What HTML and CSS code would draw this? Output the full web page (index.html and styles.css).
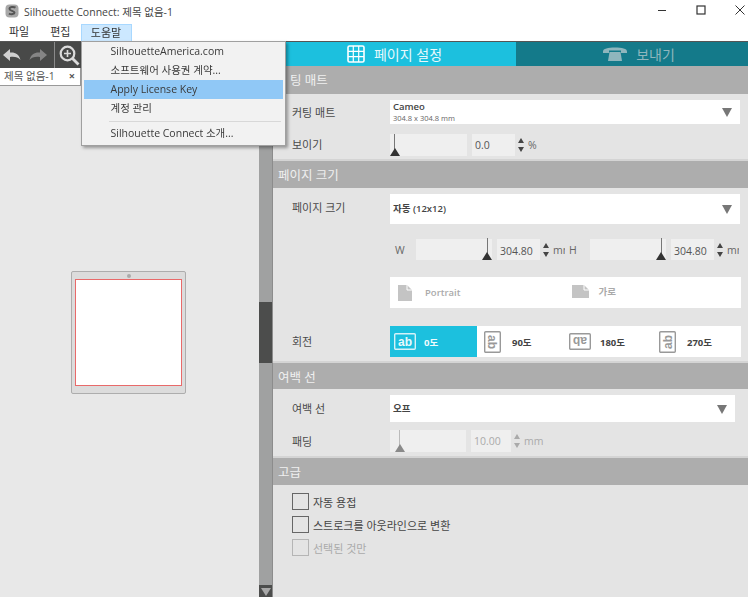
FILE: index.html
```html
<!DOCTYPE html>
<html lang="ko">
<head>
<meta charset="utf-8">
<meta name="viewport" content="width=device-width, initial-scale=1">
<title>Silhouette Connect</title>
<link rel="stylesheet" href="styles.css">
</head>
<body>
<div class="app">

  <div class="titlebar">
    <svg class="app-icon" width="14" height="14" viewBox="0 0 14 14">
      <rect x="0.5" y="0.5" width="13" height="13" rx="4" fill="#a8a8a8"/>
      <path d="M10.5 3.600C8.600 2.400 4.400 2.800 4.500 5c.1 2.200 5 1.500 5 3.600 0 1.700-3.300 2-5.600 1" fill="none" stroke="#555" stroke-width="2"/>
    </svg>
    <span class="title">Silhouette Connect: 제목 없음-1</span>
    <div class="winbtns">
      <svg width="10" height="10" viewBox="0 0 10 10"><path d="M1 5.500h8" stroke="#333" stroke-width="1"/></svg>
      <svg width="10" height="10" viewBox="0 0 10 10"><rect x="1" y="1" width="8" height="8" fill="none" stroke="#333" stroke-width="1.200"/></svg>
      <svg width="10" height="10" viewBox="0 0 10 10"><path d="M.5.500l9 9M9.500.500l-9 9" stroke="#333" stroke-width="1"/></svg>
    </div>
  </div>

  <div class="menubar">
    <span class="menu-item m-file">파일</span>
    <span class="menu-item m-edit">편집</span>
    <div class="menu-item m-help">도움말
      <div class="dropdown">
        <div class="drop-row">SilhouetteAmerica.com</div>
        <div class="drop-row">소프트웨어 사용권 계약...</div>
        <div class="drop-row hilite">Apply License Key</div>
        <div class="drop-row">계정 관리</div>
        <div class="drop-sep"></div>
        <div class="drop-row">Silhouette Connect 소개...</div>
      </div>
    </div>
  </div>

  <div class="main">
    <div class="left">
      <div class="toolbar">
        <svg class="tool-arrows" width="46" height="16" viewBox="0 0 46 16">
          <path d="M0 8l7-6v3.500c5-.5 9 1.500 10.500 7.500-2.500-2.800-5.500-3.500-10.500-3v4z" fill="#d0d0d0"/>
          <path d="M44 8l-7-6v3.500c-5-.5-9 1.500-10.500 7.500 2.500-2.800 5.500-3.500 10.500-3v4z" fill="#858585"/>
        </svg>
        <div class="tool-sep"></div>
        <svg width="21" height="21" viewBox="0 0 21 21">
          <circle cx="8.500" cy="8.500" r="6.800" fill="none" stroke="#dcdcdc" stroke-width="2.200"/>
          <path d="M13.500 13.500l6 6" stroke="#dcdcdc" stroke-width="2.800"/>
          <path d="M5 8.500h7M8.500 5v7" stroke="#dcdcdc" stroke-width="1.600"/>
        </svg>
      </div>
      <div class="docstrip">
        <div class="doctab"><span>제목 없음-1</span><span class="doctab-x">×</span></div>
      </div>
      <div class="canvas">
        <div class="mat">
          <div class="mat-dot"></div>
          <div class="mat-page"></div>
        </div>
      </div>
    </div>

    <div class="scrollbar">
      <div class="thumb"></div>
      <div class="scroll-down"></div>
    </div>

    <div class="panel">
      <div class="tabs">
        <div class="tab tab-on">
          <svg width="18" height="18" viewBox="0 0 18 18">
            <rect x="1" y="1" width="16" height="16" rx="1.500" fill="none" stroke="#fff" stroke-width="1.600"/>
            <path d="M6.300 1v16M11.700 1v16M1 6.300h16M1 11.700h16" stroke="#fff" stroke-width="1.200"/>
          </svg>
          <span>페이지 설정</span>
        </div>
        <div class="tab tab-off">
          <svg width="24" height="14" viewBox="0 0 24 14">
            <path d="M0 4.500C0 1.500 5 .5 12 .5S24 1.500 24 4.500V6h-6V3.500H6V6H0z" fill="#8fb6bd"/>
            <path d="M6.500 5h11l1.500 9H5z" fill="#8fb6bd"/>
          </svg>
          <span>보내기</span>
        </div>
      </div>

      <div class="sec-head sec-head-clip">팅 매트</div>
      <div class="sec-body sec-mat">
        <div class="row">
          <span class="lbl">커팅 매트</span>
          <div class="select select-tall">
            <div class="sel-text"><b>Cameo</b><small>304.8 x 304.8 mm</small></div>
            <i class="caret"></i>
          </div>
        </div>
        <div class="row row-slider">
          <span class="lbl">보이기</span>
          <div class="slider thumb-left"></div>
          <div class="num">0.0</div>
          <div class="spin"><i></i><i></i></div>
          <span class="unit">%</span>
        </div>
      </div>

      <div class="sec-head">페이지 크기</div>
      <div class="sec-body sec-size">
        <div class="row">
          <span class="lbl">페이지 크기</span>
          <div class="select select-size">
            <div class="sel-text"><b>자동 (12x12)</b></div>
            <i class="caret"></i>
          </div>
        </div>
        <div class="row wh-row">
          <span class="lbl"></span>
          <div class="wh">
            <span class="wh-lbl">W</span>
            <div class="slider thumb-right"></div>
            <div class="num">304.80</div>
            <div class="spin"><i></i><i></i></div>
            <span class="unit unit-clip">mm</span>
            <span class="wh-lbl wh-h">H</span>
            <div class="slider thumb-right"></div>
            <div class="num">304.80</div>
            <div class="spin"><i></i><i></i></div>
            <span class="unit unit-clip">mm</span>
          </div>
        </div>
        <div class="row orient-row">
          <span class="lbl"></span>
          <div class="orient">
            <div class="orient-cell">
              <svg width="14" height="16" viewBox="0 0 14 16"><path d="M0 0h9l5 5v11H0z" fill="#c4c4c4"/><path d="M9 0v5h5" fill="none" stroke="#fff"/></svg>
              <span>Portrait</span>
            </div>
            <div class="orient-cell orient-land">
              <svg width="17" height="13" viewBox="0 0 17 13"><path d="M0 0h12l5 5v8H0z" fill="#c4c4c4"/><path d="M12 0v5h5" fill="none" stroke="#fff"/></svg>
              <span>가로</span>
            </div>
          </div>
        </div>
        <div class="row rot-row">
          <span class="lbl">회전</span>
          <div class="rot">
            <div class="rot-cell rot-on">
              <svg width="22" height="17" viewBox="0 0 22 17"><rect x=".7" y=".7" width="20.600" height="15.600" rx="1" fill="none" stroke="#d5f2f8" stroke-width="1.400"/><text x="11" y="13" text-anchor="middle">ab</text></svg>
              <span>0도</span>
            </div>
            <div class="rot-cell rot-90">
              <svg width="17" height="22" viewBox="0 0 17 22"><rect x=".7" y=".7" width="15.600" height="20.600" rx="1" fill="none" stroke="#999" stroke-width="1.400"/><text transform="translate(4 11) rotate(90)" text-anchor="middle">ab</text></svg>
              <span>90도</span>
            </div>
            <div class="rot-cell rot-180">
              <svg width="22" height="17" viewBox="0 0 22 17"><rect x=".7" y=".7" width="20.600" height="15.600" rx="1" fill="none" stroke="#999" stroke-width="1.400"/><text transform="translate(11 4) rotate(180)" text-anchor="middle">ab</text></svg>
              <span>180도</span>
            </div>
            <div class="rot-cell rot-270">
              <svg width="17" height="22" viewBox="0 0 17 22"><rect x=".7" y=".7" width="15.600" height="20.600" rx="1" fill="none" stroke="#999" stroke-width="1.400"/><text transform="translate(13 11) rotate(-90)" text-anchor="middle">ab</text></svg>
              <span>270도</span>
            </div>
          </div>
        </div>
      </div>

      <div class="sec-head sec-head-thin">여백 선</div>
      <div class="sec-body sec-margin">
        <div class="row">
          <span class="lbl">여백 선</span>
          <div class="select select-margin">
            <div class="sel-text"><b>오프</b></div>
            <i class="caret"></i>
          </div>
        </div>
        <div class="row row-slider row-dim">
          <span class="lbl">패딩</span>
          <div class="slider thumb-mid"></div>
          <div class="num">10.00</div>
          <div class="spin"><i></i><i></i></div>
          <span class="unit">mm</span>
        </div>
      </div>

      <div class="sec-head">고급</div>
      <div class="sec-body sec-adv">
        <label class="check"><i class="box"></i>자동 용접</label>
        <label class="check"><i class="box"></i>스트로크를 아웃라인으로 변환</label>
        <label class="check check-dim"><i class="box"></i>선택된 것만</label>
      </div>
    </div>
  </div>
</div>
</body>
</html>
```

FILE: styles.css
```css
* { box-sizing: border-box; }
html, body { margin: 0; height: 100%; overflow: hidden; }
body {
  font-family: "Open Sans", "Noto Sans CJK KR", sans-serif;
  font-size: 10.5px;
  color: #333;
  background: #fff;
}
.app {
  width: 748px;
  height: 597px;
  display: flex;
  flex-direction: column;
  filter: blur(0.45px);
}

/* title + menu */
.titlebar {
  height: 22px;
  flex: none;
  display: flex;
  align-items: center;
  padding: 0 0 0 5px;
  background: #fff;
}
.title { margin-left: 5px; color: #444; font-size: 10.5px; }
.winbtns {
  margin-left: auto;
  display: flex;
  gap: 29px;
  padding-right: 3px;
  margin-top: -2px;
}
.menubar {
  height: 19px;
  flex: none;
  position: relative;
  display: flex;
  background: #fff;
  font-size: 11px;
  padding-left: 9px;
}
.menu-item { height: 17px; line-height: 15px; margin-top: 2px; }
.m-edit { margin-left: 21px; }
.m-help {
  position: relative;
  margin-left: 10px;
  width: 51px;
  text-align: center;
  background: #cce8ff;
  border: 1px solid #a8d8ff;
  border-bottom: 0;
  z-index: 5;
}
.dropdown {
  position: absolute;
  left: -1px;
  top: 16px;
  width: 205px;
  height: 105px;
  padding: 0 2px;
  text-align: left;
  background: #f2f2f2;
  border: 1px solid #a0a0a0;
  box-shadow: 2px 2px 3px rgba(0,0,0,.35);
  font-size: 10.5px;
}
.drop-row { height: 19px; line-height: 19px; padding-left: 27px; color: #3a3a3a; }
.drop-row.hilite { background: #90c8f6; }
.drop-sep { height: 1px; margin: 3px 2px 2px 25px; background: #d8d8d8; }

.main { flex: 1; display: flex; min-height: 0; border-top: 1px solid #555; }

/* left side */
.left { width: 259px; flex: none; display: flex; flex-direction: column; }
.toolbar {
  height: 26px;
  flex: none;
  display: flex;
  align-items: center;
  padding-left: 3px;
  background: #484948;
}
.tool-sep { width: 1px; height: 26px; margin: 0 4px 0 5px; background: #8a8a8a; }
.docstrip { height: 18px; flex: none; background: #ececec; border-bottom: 1px solid #aaa; }
.doctab {
  width: 81px;
  height: 18px;
  display: flex;
  justify-content: space-between;
  align-items: center;
  padding: 0 5px 2px 4px;
  background: #fff;
  border-right: 1px solid #999;
  border-bottom: 1px solid #999;
  font-size: 10.5px;
  color: #555;
}
.doctab-x { font-size: 11px; font-weight: 700; }
.canvas {
  flex: 1;
  display: flex;
  justify-content: center;
  padding: 185px 3px 0 0;
  background: #e8e8e8;
}
.mat {
  position: relative;
  width: 115px;
  height: 123px;
  padding: 7px 3px 0;
  background: #dcdcdc;
  border: 1px solid #adadad;
  border-radius: 2px;
}
.mat-dot {
  position: absolute;
  left: 55px;
  top: 2px;
  width: 4px;
  height: 4px;
  border-radius: 50%;
  background: #aaa;
}
.mat-page { width: 107px; height: 107px; background: #fff; border: 1px solid #e86a6a; }

.scrollbar {
  position: relative;
  width: 13px;
  flex: none;
  background: #a0a1a1;
}
.thumb {
  position: absolute;
  left: 0;
  right: 0;
  top: 260px;
  height: 61px;
  background: #4c4d4c;
}
.scroll-down {
  position: absolute;
  left: 0;
  right: 0;
  bottom: 0;
  height: 12px;
  background: #4c4d4c;
}
.scroll-down::after {
  content: "";
  position: absolute;
  left: 2px;
  top: 3px;
  border-left: 5px solid transparent;
  border-right: 5px solid transparent;
  border-top: 8px solid #a8a8a8;
}

/* right side */
.panel {
  flex: 1;
  min-width: 0;
  display: flex;
  flex-direction: column;
  background: #e4e4e4;
  border-left: 1px solid #8c8c8c;
}
.tabs { height: 24px; flex: none; display: flex; }
.tab { display: flex; align-items: center; justify-content: center; font-size: 14px; }
.tab span { margin-left: 9px; }
.tab-on { width: 243px; background: #1cc0de; color: #e8f9fc; }
.tab-off { flex: 1; background: #147a8a; color: #8fb6bd; padding-left: 14px; }
.sec-head {
  height: 27px;
  flex: none;
  line-height: 29px;
  padding-left: 5px;
  background: #adadad;
  color: #f0f0f0;
  font-size: 12.5px;
}
.sec-head-clip { height: 28px; text-indent: 12px; line-height: 30px; }
.sec-head-thin { height: 26px; }
.sec-body { padding: 6px 0 0 19px; border-bottom: 2px solid #d4d4d4; }
.sec-mat { height: 67px; }
.sec-size { height: 175px; }
.sec-margin { height: 69px; }
.sec-adv { flex: 1; padding-top: 8px; border: 0; }
.row { display: flex; }
.lbl { width: 98px; flex: none; color: #4a4a4a; font-size: 11px; line-height: 26px; }
.sec-size .lbl { line-height: 28px; }
.sec-margin .lbl { line-height: 27px; }

.select {
  position: relative;
  display: flex;
  align-items: center;
  background: #fff;
  padding-left: 3px;
}
.select-tall { width: 350px; height: 24px; }
.select-size { width: 350px; height: 30px; }
.select-margin { width: 345px; height: 27px; }
.sel-text b { display: block; font-size: 9.500px; font-weight: 600; color: #444; line-height: 12px; }
.sel-text small { display: block; font-size: 7.500px; color: #666; line-height: 10px; }
.caret {
  position: absolute;
  right: 8px;
  top: 50%;
  margin-top: -4px;
  border-left: 5px solid transparent;
  border-right: 5px solid transparent;
  border-top: 9px solid #777;
}

.row-slider { margin-top: 8px; height: 22px; align-items: center; }
.slider { position: relative; width: 77px; height: 22px; flex: none; background: #efefef; }
.slider::before {
  content: "";
  position: absolute;
  bottom: 4px;
  width: 1px;
  height: 18px;
  background: #777;
}
.slider::after {
  content: "";
  position: absolute;
  bottom: 0;
  border-left: 5px solid transparent;
  border-right: 5px solid transparent;
  border-bottom: 8px solid #333;
}
.thumb-left::before { left: 4px; }
.thumb-left::after { left: 0; }
.thumb-right::before { right: 4px; }
.thumb-right::after { right: 0; }
.thumb-mid::before { left: 9px; background: #bbb; }
.thumb-mid::after { left: 5px; border-bottom-color: #8a8a8a; }
.num {
  width: 43px;
  height: 22px;
  flex: none;
  margin-left: 5px;
  padding: 0 0 0 3px;
  background: #efefef;
  color: #555;
  font-size: 10.500px;
  line-height: 23px;
}
.spin {
  width: 10px;
  flex: none;
  margin-left: 1px;
  display: flex;
  flex-direction: column;
  align-items: center;
  gap: 4px;
}
.spin i:first-child {
  border-left: 3px solid transparent;
  border-right: 3px solid transparent;
  border-bottom: 5px solid #444;
}
.spin i:last-child {
  border-left: 3px solid transparent;
  border-right: 3px solid transparent;
  border-top: 5px solid #444;
}
.unit { margin-left: 2px; color: #666; font-size: 10.500px; }
.unit-clip { width: 12px; flex: none; overflow: hidden; }
.row-dim .slider { width: 76px; }
.row-dim .num { width: 40px; color: #aaa; }
.row-dim .spin i:first-child { border-bottom-color: #aaa; }
.row-dim .spin i:last-child { border-top-color: #aaa; }
.row-dim .unit { color: #aaa; }

.wh-row { margin-top: 15px; }
.wh { width: 350px; height: 21px; display: flex; align-items: center; }
.wh .slider { width: 76px; height: 21px; }
.wh-lbl { width: 26px; flex: none; padding-left: 5px; color: #666; font-size: 10.500px; }
.wh-h { margin-left: -1px; }
.wh .num { height: 21px; line-height: 24px; }

.orient-row { margin-top: 17px; }
.orient { width: 351px; height: 31px; display: flex; background: #fff; }
.orient-cell {
  width: 176px;
  display: flex;
  align-items: center;
  padding-left: 8px;
  color: #aaa;
  font-size: 9.500px;
  font-weight: 600;
}
.orient-cell span { margin-left: 13px; }
.orient-land { padding-left: 6px; padding-bottom: 3px; }
.orient-land span { margin-left: 10px; }

.rot-row { margin-top: 18px; }
.rot-row .lbl { line-height: 31px; }
.rot { width: 351px; height: 31px; display: flex; background: #fff; }
.rot-cell {
  display: flex;
  align-items: center;
  font-size: 9.500px;
  font-weight: 700;
  color: #444;
}
.rot-cell text { font-size: 12px; fill: #999; font-family: "Liberation Sans", sans-serif; }
.rot-on { width: 87px; padding-left: 4px; background: #1cc0de; color: #f0fbfd; }
.rot-on text { fill: #e8f9fc; }
.rot-on span { margin-left: 8px; }
.rot-90 { width: 87px; padding-left: 7px; }
.rot-90 span { margin-left: 11px; }
.rot-180 { width: 90px; padding-left: 5px; }
.rot-180 span { margin-left: 9px; }
.rot-270 { padding-left: 5px; }
.rot-270 span { margin-left: 11px; }

.check {
  display: flex;
  align-items: center;
  height: 17px;
  margin-bottom: 6px;
  color: #444;
  font-size: 11px;
}
.box {
  width: 17px;
  height: 17px;
  margin-right: 4px;
  border: 1px solid #666;
}
.check-dim { color: #aaa; }
.check-dim .box { border-color: #b5b5b5; }
```
